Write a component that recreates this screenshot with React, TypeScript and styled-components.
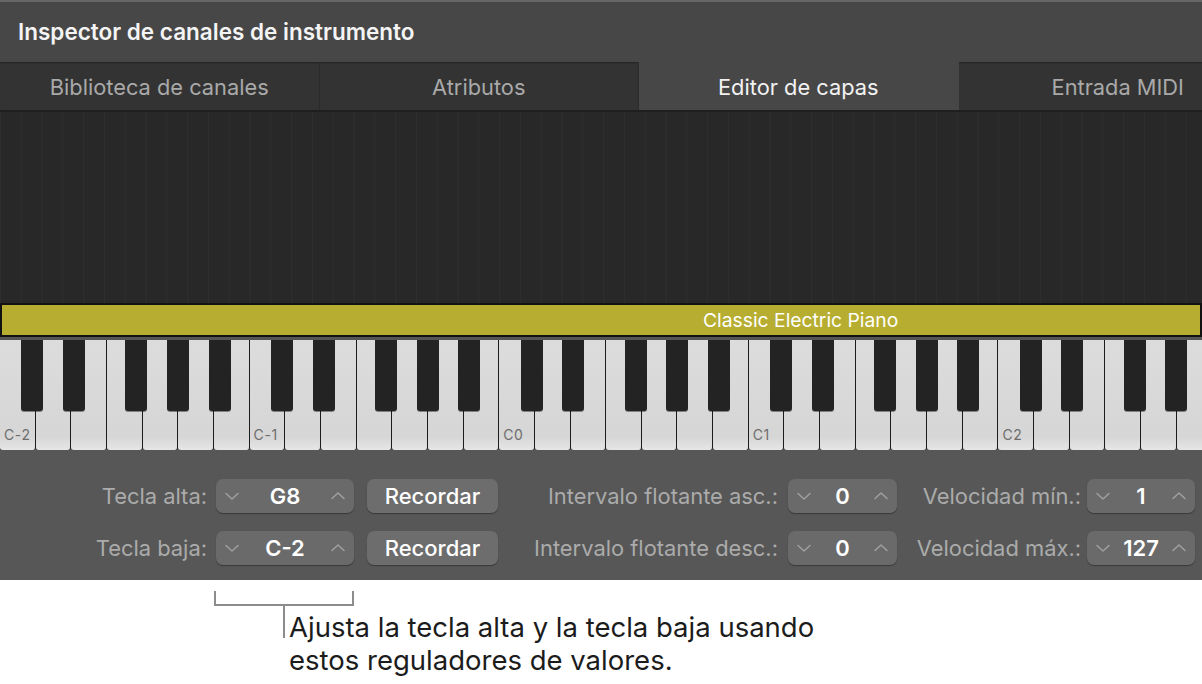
import React from "react";
import styled, { createGlobalStyle } from "styled-components";

const OCT = 249.6;
const WHITE = OCT / 7;
const SEMI = OCT / 12;

const Global = createGlobalStyle`
  html, body { margin: 0; padding: 0; background: #ffffff; }
  body {
    font-family: Inter, "Noto Sans", sans-serif;
    width: 1202px;
    height: 684px;
    overflow: hidden;
  }
  * { box-sizing: border-box; }
`;

const Page = styled.div`
  width: 1202px;
  height: 684px;
  display: flex;
  flex-direction: column;
  background: #ffffff;
`;

const Window = styled.div`
  display: flex;
  flex-direction: column;
  width: 1202px;
  overflow: hidden;
`;

const TitleBar = styled.div`
  height: 62px;
  background: #474747;
  border-top: 2px solid #666666;
  display: flex;
  align-items: center;
  padding: 0 0 2px 18px;
  color: #f4f4f4;
  font-weight: 600;
  font-size: 22.5px;
`;

const TabBar = styled.div`
  height: 48px;
  display: flex;
  background: #333333;
  overflow: hidden;
`;

const Tab = styled.div<{ $active?: boolean }>`
  flex: 0 0 319.5px;
  display: flex;
  align-items: center;
  justify-content: center;
  padding-top: 1px;
  font-size: 21.8px;
  color: ${(p) => (p.$active ? "#f2f2f2" : "#a9a9a9")};
  background: ${(p) => (p.$active ? "#474747" : "#333333")};
  border-right: 1px solid ${(p) => (p.$active ? "#474747" : "#2b2b2b")};
  box-shadow: ${(p) => (p.$active ? "none" : "inset 0 2px 2px -1px rgba(0,0,0,0.35)")};
`;

const Editor = styled.div`
  height: 193px;
  background-color: #282828;
  background-image: linear-gradient(90deg, #2e2e2e 0 1px, transparent 1px);
  background-size: ${SEMI}px 100%;
  border-top: 2px solid #1f1f1f;
`;

const LayerBar = styled.div`
  height: 34px;
  background: #b7ae31;
  border: 2px solid #121212;
  display: flex;
  align-items: center;
  padding-left: 701px;
  color: #ffffff;
  font-size: 19.3px;
`;

const KeyboardArea = styled.div`
  position: relative;
  height: 113px;
  padding-top: 3px;
  background: #555555;
  display: flex;
  overflow: hidden;
`;

const WhiteKey = styled.div`
  flex: 0 0 ${WHITE}px;
  height: 110px;
  background: linear-gradient(180deg, #dcdcdc 0%, #d6d6d6 88%, #e6e6e6 100%);
  border-right: 1.5px solid #1c1c1c;
  border-radius: 0 0 3px 3px;
  display: flex;
  align-items: flex-end;
  padding: 0 0 7px 4px;
  font-size: 14px;
  color: #6d6d6d;
  letter-spacing: 0.6px;
`;

const BlackKey = styled.div.attrs<{ $left: number }>((p) => ({
  style: { left: `${p.$left}px` },
}))<{ $left: number }>`
  position: absolute;
  top: 3px;
  width: 22px;
  height: 71px;
  background: #232323;
  border-radius: 0 0 3px 3px;
  box-shadow: 0 1px 0 rgba(0, 0, 0, 0.4);
`;

const Controls = styled.div`
  height: 130px;
  background: #575757;
  display: grid;
  grid-template-columns: 216px 138px 144px 290px 109px 190px 108px;
  grid-template-rows: 34px 34px;
  row-gap: 18px;
  align-content: start;
  padding-top: 29px;
`;

const Label = styled.div<{ $pad: number }>`
  justify-self: end;
  align-self: center;
  padding-right: ${(p) => p.$pad}px;
  font-size: 21.9px;
  color: #ababab;
  white-space: nowrap;
`;

const Stepper = styled.div`
  display: flex;
  align-items: center;
  justify-content: space-between;
  padding: 0 8px 0 8px;
  background: #6a6a6a;
  border-radius: 7px;
  box-shadow: 0 1px 1px rgba(0, 0, 0, 0.35);
`;

const StepValue = styled.span`
  font-size: 22px;
  font-weight: 600;
  color: #ffffff;
`;

const Chevron = styled.svg`
  width: 16px;
  height: 10px;
  flex: 0 0 auto;
`;

const Button = styled.div`
  justify-self: end;
  width: 131px;
  display: flex;
  align-items: center;
  justify-content: center;
  background: #6d6d6d;
  border-radius: 7px;
  box-shadow: 0 1px 1px rgba(0, 0, 0, 0.35);
  font-size: 22px;
  font-weight: 500;
  color: #ffffff;
`;

const Callout = styled.div`
  display: flex;
  flex-direction: column;
  padding: 11px 0 0 214px;
`;

const Bracket = styled.div`
  width: 140px;
  height: 15px;
  border: 2px solid #8c8c8c;
  border-top: none;
`;

const CalloutBody = styled.div`
  display: flex;
  align-items: flex-start;
  padding-left: 69px;
`;

const Stem = styled.div`
  width: 2px;
  height: 34px;
  background: #8c8c8c;
  margin-top: -2px;
`;

const CalloutText = styled.p`
  margin: 5px 0 0 4px;
  font-size: 27.5px;
  line-height: 33px;
  color: #1c1c1c;
  white-space: nowrap;
`;

const Down = () => (
  <Chevron viewBox="0 0 16 10">
    <polyline points="2,2.5 8,8 14,2.5" fill="none" stroke="#a0a0a0" strokeWidth="1.5" strokeLinecap="round" strokeLinejoin="round" />
  </Chevron>
);
const Up = () => (
  <Chevron viewBox="0 0 16 10">
    <polyline points="2,7.5 8,2 14,7.5" fill="none" stroke="#a0a0a0" strokeWidth="1.5" strokeLinecap="round" strokeLinejoin="round" />
  </Chevron>
);

const Step = ({ value }: { value: string }) => (
  <Stepper>
    <Down />
    <StepValue>{value}</StepValue>
    <Up />
  </Stepper>
);

const octaves = [-2, -1, 0, 1, 2];
const blackOffsets = [1, 3, 6, 8, 10];

export default function App() {
  const whites: React.ReactNode[] = [];
  const blacks: React.ReactNode[] = [];
  octaves.forEach((o, oi) => {
    for (let i = 0; i < 7; i++) {
      whites.push(<WhiteKey key={`w${o}${i}`}>{i === 0 ? `C${o}` : ""}</WhiteKey>);
    }
    blackOffsets.forEach((s) => {
      blacks.push(<BlackKey key={`b${o}${s}`} $left={oi * OCT + s * SEMI + 0.5} />);
    });
  });

  return (
    <Page>
      <Global />
      <Window>
        <TitleBar>Inspector de canales de instrumento</TitleBar>
        <TabBar>
          <Tab>Biblioteca de canales</Tab>
          <Tab>Atributos</Tab>
          <Tab $active>Editor de capas</Tab>
          <Tab>Entrada MIDI</Tab>
        </TabBar>
        <Editor />
        <LayerBar>Classic Electric Piano</LayerBar>
        <KeyboardArea>
          {whites}
          {blacks}
        </KeyboardArea>
        <Controls>
          <Label $pad={9}>Tecla alta:</Label>
          <Step value="G8" />
          <Button>Recordar</Button>
          <Label $pad={10}>Intervalo flotante asc.:</Label>
          <Step value="0" />
          <Label $pad={6}>Velocidad mín.:</Label>
          <Step value="1" />

          <Label $pad={9}>Tecla baja:</Label>
          <Step value="C-2" />
          <Button>Recordar</Button>
          <Label $pad={10}>Intervalo flotante desc.:</Label>
          <Step value="0" />
          <Label $pad={6}>Velocidad máx.:</Label>
          <Step value="127" />
        </Controls>
      </Window>
      <Callout>
        <Bracket />
        <CalloutBody>
          <Stem />
          <CalloutText>
            Ajusta la tecla alta y la tecla baja usando
            <br />
            estos reguladores de valores.
          </CalloutText>
        </CalloutBody>
      </Callout>
    </Page>
  );
}
